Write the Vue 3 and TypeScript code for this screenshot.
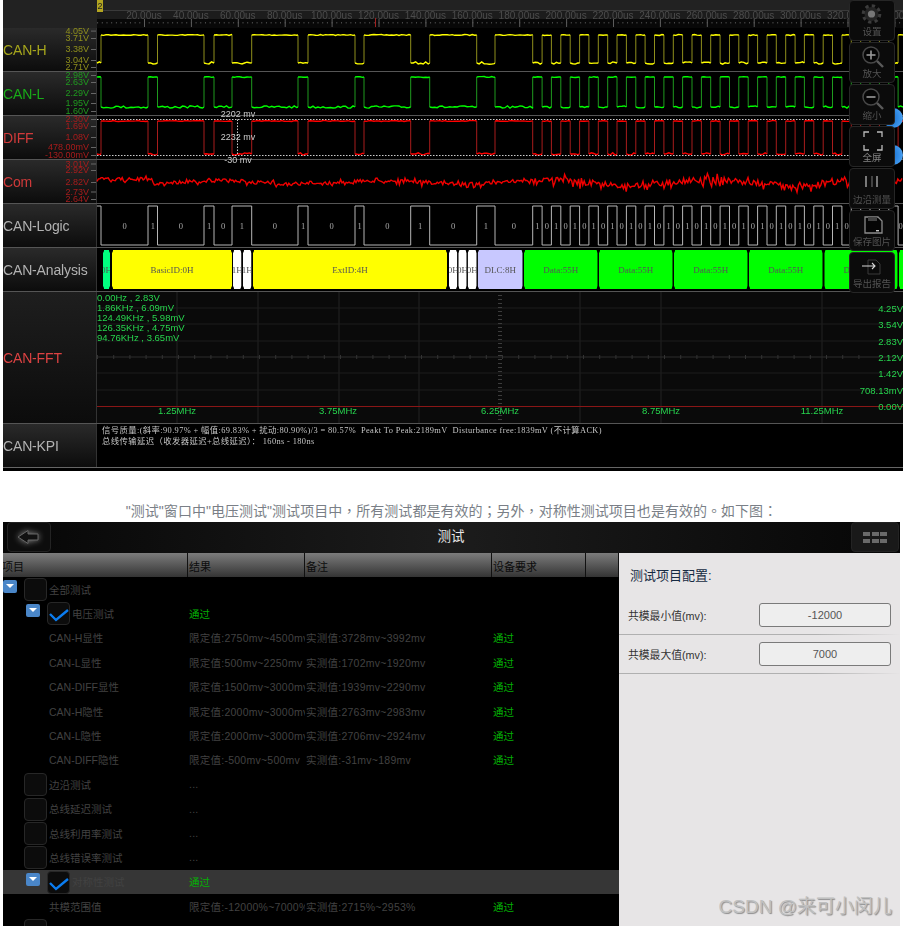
<script setup lang="ts">
// scope plot area is 806px wide, one CAN bit is 9.37px
const plotWidth = 806;
const bitWidth = 9.37;

let seed = 7;
const rnd = () => {
  seed = (seed * 16807) % 2147483647;
  return seed / 2147483647;
};

const edges = [4, 51, 60.5, 107, 117, 135, 154.7, 201, 211, 258, 267, 313.7, 332.7, 379.7, 398, 435.7];
for (let x = 435.7 + bitWidth; x < plotWidth; x += bitWidth) edges.push(+x.toFixed(1));

interface Trace {
  name: string;
  cls: string;
  color: string;
  dim: string;
  flat: string;
  rise: string;
  axis: { y: number; text: string }[];
}

const squareWave = (startHigh: boolean, hi: number, lo: number) => {
  let high = startHigh;
  let from = 0;
  let flat = "";
  let rise = "";
  for (const edge of [...edges, plotWidth]) {
    const y = high ? hi : lo;
    flat += `M${from} ${y}`;
    for (let x = from + 2.5; x < edge; x += 2.5) {
      flat += `L${x} ${(y + (rnd() - 0.5) * (high ? 1 : 2.4)).toFixed(1)}`;
    }
    flat += `L${edge} ${y}`;
    if (edge < plotWidth) rise += `M${edge} ${hi}V${lo}`;
    high = !high;
    from = edge;
  }
  return { flat, rise };
};

const traces: Trace[] = [
  {
    name: "CAN-H",
    cls: "name-yellow",
    color: "#ffff00",
    dim: "#8f8f1c",
    ...squareWave(false, 7, 35),
    axis: [
      { y: 2.6, text: "4.05V" },
      { y: 10, text: "3.71V" },
      { y: 21, text: "3.38V" },
      { y: 32, text: "3.04V" },
      { y: 39, text: "2.71V" },
    ],
  },
  {
    name: "CAN-L",
    cls: "name-green",
    color: "#00ff00",
    dim: "#1f9a1f",
    ...squareWave(true, 5, 35),
    axis: [
      { y: 3, text: "2.98V" },
      { y: 10, text: "2.63V" },
      { y: 21, text: "2.29V" },
      { y: 31, text: "1.95V" },
      { y: 39, text: "1.60V" },
    ],
  },
  {
    name: "DIFF",
    cls: "name-red",
    color: "#ff0000",
    dim: "#a81c1c",
    ...squareWave(false, 5, 38),
    axis: [
      { y: 3, text: "2.30V" },
      { y: 10, text: "1.69V" },
      { y: 21, text: "1.08V" },
      { y: 31, text: "478.00mV" },
      { y: 39, text: "-130.00mV" },
    ],
  },
];

const comAxis = [
  { y: 3.5, text: "3.01V" },
  { y: 10, text: "2.92V" },
  { y: 22, text: "2.82V" },
  { y: 31.5, text: "2.73V" },
  { y: 39, text: "2.64V" },
];

const comPath = (() => {
  let d = "";
  for (let x = 0; x <= plotWidth; x += 1.4) {
    const busy = x > 440 ? 6 : 3.4;
    const drift = x < 55 ? -3 : Math.sin(x / 26) * (x > 440 ? 3 : 1.6);
    const y = 22 + drift + (rnd() - 0.42) * busy * (rnd() > 0.75 ? 2.2 : 1);
    d += `${d ? "L" : "M"}${x.toFixed(1)} ${y.toFixed(1)}`;
  }
  return d;
})();

const logicPath = (() => {
  let high = true;
  let d = "M0 2";
  for (const edge of edges) {
    d += `H${edge}V${high ? 41 : 2}`;
    high = !high;
  }
  return d + `H${plotWidth}`;
})();

const logicBits = edges.map((edge, i) => ({
  x: (edge + (edges[i + 1] ?? plotWidth)) / 2,
  text: i % 2 ? "1" : "0",
}));

interface Seg {
  from: number;
  to: number;
  fill: string;
  text: string;
}
const segs: Seg[] = [
  { from: 103, to: 110, fill: "#00ff80", text: "0H" },
  { from: 112, to: 232, fill: "#ffff00", text: "BasicID:0H" },
  { from: 233, to: 241.5, fill: "#ffffff", text: "1H" },
  { from: 243, to: 251.5, fill: "#ffffff", text: "1H" },
  { from: 253, to: 447, fill: "#ffff00", text: "ExtID:4H" },
  { from: 449, to: 457.3, fill: "#ffffff", text: "0H" },
  { from: 458.3, to: 466.7, fill: "#ffffff", text: "0H" },
  { from: 467.7, to: 476.7, fill: "#ffffff", text: "0H" },
  { from: 477.7, to: 522.7, fill: "#c8c8ff", text: "DLC:8H" },
  { from: 524, to: 597.7, fill: "#00ff00", text: "Data:55H" },
  { from: 599, to: 672.7, fill: "#00ff00", text: "Data:55H" },
  { from: 674, to: 747.7, fill: "#00ff00", text: "Data:55H" },
  { from: 749, to: 822.7, fill: "#00ff00", text: "Data:55H" },
  { from: 824.3, to: 897.7, fill: "#00ff00", text: "Data:55H" },
  { from: 899, to: 910, fill: "#00ff00", text: "" },
];
const segPoints = (s: Seg) => {
  const a = s.from - 97;
  const b = s.to - 97;
  return `${a + 1},2 ${b - 1},2 ${b},5 ${b},38 ${b - 1},41 ${a + 1},41 ${a},38 ${a},5`;
};

const rulerMajors = Array.from({ length: 17 }, (_, i) => 47 + 46.9 * i);
const rulerMinors = Array.from({ length: 180 }, (_, i) => 0.1 + 4.69 * i).filter((x) => x < plotWidth);

const fftV = [80, 161, 242, 322, 483, 564, 725];
const fftH = [16, 32, 49, 65, 81, 98];
const fftPeaks = ["0.00Hz , 2.83V", "1.86KHz , 6.09mV", "124.49KHz , 5.98mV", "126.35KHz , 4.75mV", "94.76KHz , 3.65mV"];
const fftRight = [
  { y: 16, text: "4.25V" },
  { y: 32, text: "3.54V" },
  { y: 49, text: "2.83V" },
  { y: 65, text: "2.12V" },
  { y: 81, text: "1.42V" },
  { y: 98, text: "708.13mV" },
  { y: 114, text: "0.00V" },
];
const fftBottom = [
  { x: 80, text: "1.25MHz" },
  { x: 241, text: "3.75MHz" },
  { x: 403, text: "6.25MHz" },
  { x: 564, text: "8.75MHz" },
  { x: 725, text: "11.25MHz" },
];
const fftTicksH = Array.from({ length: 66 }, (_, i) => i * 16.2).filter((x) => x < 770);
const fftTicksV = Array.from({ length: 32 }, (_, i) => 3 + i * 4);

const tools = ["设置", "放大", "缩小", "全屏", "边沿测量", "保存图片", "导出报告"];

interface Row {
  name: string;
  indent: 0 | 1 | 2;
  box?: boolean;
  open?: boolean;
  checked?: boolean;
  limit?: string;
  real?: string;
  pass?: boolean;
  groupPass?: boolean;
  active?: boolean;
}

const rows: Row[] = [
  { name: "全部测试", indent: 1, box: true, open: true },
  { name: "电压测试", indent: 2, box: true, open: true, checked: true, groupPass: true },
  { name: "CAN-H显性", indent: 0, limit: "限定值:2750mv~4500mv", real: "实测值:3728mv~3992mv", pass: true },
  { name: "CAN-L显性", indent: 0, limit: "限定值:500mv~2250mv", real: "实测值:1702mv~1920mv", pass: true },
  { name: "CAN-DIFF显性", indent: 0, limit: "限定值:1500mv~3000mv", real: "实测值:1939mv~2290mv", pass: true },
  { name: "CAN-H隐性", indent: 0, limit: "限定值:2000mv~3000mv", real: "实测值:2763mv~2983mv", pass: true },
  { name: "CAN-L隐性", indent: 0, limit: "限定值:2000mv~3000mv", real: "实测值:2706mv~2924mv", pass: true },
  { name: "CAN-DIFF隐性", indent: 0, limit: "限定值:-500mv~500mv", real: "实测值:-31mv~189mv", pass: true },
  { name: "边沿测试", indent: 1, box: true, limit: "..." },
  { name: "总线延迟测试", indent: 1, box: true, limit: "..." },
  { name: "总线利用率测试", indent: 1, box: true, limit: "..." },
  { name: "总线错误率测试", indent: 1, box: true, limit: "..." },
  { name: "对称性测试", indent: 2, box: true, open: true, checked: true, groupPass: true, active: true },
  { name: "共模范围值", indent: 0, limit: "限定值:-12000%~7000%", real: "实测值:2715%~2953%", pass: true },
  { name: "", indent: 1, box: true },
];
</script>

<template>
  <div class="page">
    <section class="scope">
      <div class="scope-top">
        <div class="top-left"></div>
        <svg class="plot" width="806" height="28">
          <rect width="806" height="10" fill="#222" />
          <rect y="10" width="806" height="1" fill="#3a3a3a" />
          <rect y="11" width="806" height="8" fill="#1c1c1c" />
          <rect y="19" width="806" height="9" fill="#080808" />
          <rect width="6" height="12" fill="#b3a521" />
          <text x="3" y="9" class="marker" text-anchor="middle">2</text>
          <text v-for="(x, i) in rulerMajors" :key="i" :x="x" y="19" class="ruler-text" text-anchor="middle">
            {{ ((i + 1) * 20).toFixed(2) }}us
          </text>
          <rect v-for="x in rulerMinors" :key="x" :x="x" y="22" width="1" height="1.5" fill="#4c4c4c" />
          <rect v-for="x in rulerMajors" :key="x" :x="x" y="19" width="1" height="8" fill="#5c5c5c" />
          <rect x="278" y="18" width="1" height="9" fill="#a02020" />
        </svg>
      </div>

      <div v-for="t in traces" :key="t.name" class="scope-row">
        <div class="label">
          <span class="name" :class="t.cls">{{ t.name }}</span>
          <svg class="axis" width="44" height="43">
            <template v-for="a in t.axis" :key="a.text">
              <text x="37" :y="a.y + 3" text-anchor="end" class="axis-text" :fill="t.dim">{{ a.text }}</text>
              <rect x="39" :y="a.y" width="5" height="1" fill="#666" />
            </template>
          </svg>
        </div>
        <svg class="plot" width="806" height="43">
          <path :d="t.rise" :stroke="t.dim" fill="none" stroke-width="1" />
          <path :d="t.flat" :stroke="t.color" fill="none" stroke-width="1.4" />
          <template v-if="t.name === 'DIFF'">
            <line x1="0" x2="752" y1="3.5" y2="3.5" class="dotted" />
            <line x1="0" x2="752" y1="39.5" y2="39.5" class="dotted" />
            <line x1="140.5" x2="140.5" y1="3.5" y2="39.5" class="dotted" />
            <text x="141" y="1" class="cursor-text" text-anchor="middle">2202 mv</text>
            <text x="141" y="24" class="cursor-text" text-anchor="middle">2232 mv</text>
            <text x="141" y="47" class="cursor-text" text-anchor="middle">-30 mv</text>
          </template>
        </svg>
      </div>

      <div class="scope-row">
        <div class="label">
          <span class="name name-red">Com</span>
          <svg class="axis" width="44" height="43">
            <template v-for="a in comAxis" :key="a.text">
              <text x="37" :y="a.y + 3" text-anchor="end" class="axis-text" fill="#a81c1c">{{ a.text }}</text>
              <rect x="39" :y="a.y" width="5" height="1" fill="#666" />
            </template>
          </svg>
        </div>
        <svg class="plot" width="806" height="43">
          <path :d="comPath" stroke="#f00000" fill="none" stroke-width="1.4" />
        </svg>
      </div>

      <div class="scope-row">
        <div class="label"><span class="name">CAN-Logic</span></div>
        <svg class="plot" width="806" height="43">
          <path :d="logicPath" stroke="#b5b5b5" fill="none" stroke-width="1" />
          <text v-for="(b, i) in logicBits" :key="i" :x="b.x" y="25" class="bit-text" text-anchor="middle">
            {{ b.text }}
          </text>
        </svg>
      </div>

      <div class="scope-row">
        <div class="label"><span class="name">CAN-Analysis</span></div>
        <svg class="plot" width="806" height="43">
          <defs>
            <clipPath v-for="(s, i) in segs" :id="`seg-${i}`" :key="i">
              <polygon :points="segPoints(s)" />
            </clipPath>
          </defs>
          <g v-for="(s, i) in segs" :key="i" :clip-path="`url(#seg-${i})`">
            <polygon :points="segPoints(s)" :fill="s.fill" />
            <text :x="(s.from + s.to) / 2 - 97" y="24.5" class="seg-text" text-anchor="middle">{{ s.text }}</text>
          </g>
        </svg>
      </div>

      <div class="scope-row fft-row">
        <div class="label"><span class="name name-fft">CAN-FFT</span></div>
        <svg class="plot fft" width="806" height="131">
          <line v-for="x in fftV" :key="x" :x1="x" :x2="x" y1="0" y2="131" stroke="#222" />
          <line v-for="y in fftH" :key="y" x1="0" x2="806" :y1="y" :y2="y" :stroke="y === 65 ? '#2c2c2c' : '#1c1c1c'" />
          <rect v-for="x in fftTicksH" :key="x" :x="x" y="63" width="1" height="4" fill="#333" />
          <rect v-for="y in fftTicksV" :key="y" x="401" :y="y" width="4" height="1" fill="#3c3c3c" />
          <line x1="0" x2="806" y1="114.5" y2="114.5" stroke="#8a1616" />
          <text v-for="(p, i) in fftPeaks" :key="p" x="0" :y="8.5 + i * 10" class="fft-text">{{ p }}</text>
          <text v-for="r in fftRight" :key="r.text" x="806" :y="r.y + 3.5" class="fft-text" text-anchor="end">
            {{ r.text }}
          </text>
          <text v-for="b in fftBottom" :key="b.text" :x="b.x" y="122" class="fft-text" text-anchor="middle">
            {{ b.text }}
          </text>
        </svg>
      </div>

      <div class="scope-row kpi-row">
        <div class="label"><span class="name">CAN-KPI</span></div>
        <div class="kpi">
          <div>信号质量:(斜率:90.97% + 幅值:69.83% + 扰动:80.90%)/3 = 80.57%&nbsp; Peakt To Peak:2189mV&nbsp; Disturbance free:1839mV (不计算ACK)</div>
          <div>总线传输延迟（收发器延迟+总线延迟）： 160ns - 180ns</div>
        </div>
      </div>

      <span class="blob blob-a"></span>
      <span class="blob blob-b"></span>

      <aside class="tools">
        <div v-for="(tool, i) in tools" :key="tool" class="tool" :class="{ bright: i === 3 }">
          <svg width="46" height="27" class="tool-icon">
            <g v-if="i === 0">
              <circle cx="22.5" cy="14" r="8" fill="none" stroke="#3c3c3c" stroke-width="3.6" stroke-dasharray="3.2 3.08" />
              <circle cx="22.5" cy="14" r="7" fill="#242424" />
              <circle cx="22.5" cy="14" r="3.6" fill="#777" />
            </g>
            <g v-else-if="i === 1 || i === 2">
              <circle cx="22" cy="13" r="8" fill="#060606" stroke="#484848" stroke-width="1.5" />
              <path d="M28 19L34 25" stroke="#5a5a5a" stroke-width="2.4" />
              <path d="M17.5 13H26.5" stroke="#9a9a9a" stroke-width="1.6" />
              <path v-if="i === 1" d="M22 8.5V17.5" stroke="#9a9a9a" stroke-width="1.6" />
            </g>
            <g v-else-if="i === 3" fill="none" stroke="#bcbcbc" stroke-width="1.3">
              <path d="M15 11V6H20M28 6H33V11M33 19V24H28M20 24H15V19" />
            </g>
            <g v-else-if="i === 4" stroke-width="1.4">
              <path d="M17 8V19" stroke="#a8a8a8" />
              <path d="M23 8V19" stroke="#5a5a5a" />
              <path d="M28 8V19" stroke="#a8a8a8" />
            </g>
            <g v-else-if="i === 5">
              <path d="M16 7H29L33 11V23H16Z" fill="#050505" stroke="#8c8c8c" stroke-width="1.3" />
              <rect x="19" y="7" width="9" height="4" fill="#444" />
              <rect x="27" y="20" width="3" height="1.4" fill="#c8c8c8" />
            </g>
            <g v-else>
              <path d="M19 8H27L31 12V22H19Z" fill="#0a0a0a" stroke="#3a3a3a" />
              <path d="M13 14H26M23 11L26 14L23 17" fill="none" stroke="#d8d8d8" stroke-width="1.1" />
            </g>
          </svg>
          <span class="tool-label">{{ tool }}</span>
        </div>
      </aside>
    </section>

    <p class="caption">"测试"窗口中"电压测试"测试项目中，所有测试都是有效的；另外，对称性测试项目也是有效的。如下图：</p>

    <section class="tester">
      <header class="tester-head">
        <button class="head-btn back-btn" type="button">
          <svg width="44" height="30">
            <path d="M11 15L21 8.5V12H31V18H21V21.5Z" fill="#111" stroke="#666" stroke-width="1" />
          </svg>
        </button>
        <span class="tester-title">测试</span>
        <button class="head-btn menu-btn" type="button">
          <i v-for="n in 6" :key="n"></i>
        </button>
      </header>

      <div class="tester-body">
        <div class="table">
          <div class="thead">
            <span class="c1">项目</span>
            <span class="c2">结果</span>
            <span class="c3">备注</span>
            <span class="c4">设备要求</span>
            <span class="c5"></span>
          </div>
          <div v-for="(r, i) in rows" :key="i" class="tr" :class="{ active: r.active }">
            <div class="c1 tree" :class="`indent-${r.indent}`">
              <span v-if="r.open" class="expander"></span>
              <span v-if="r.box" class="check">
                <svg v-if="r.checked" width="23" height="23">
                  <path d="M3 12L9 18L21 8" fill="none" stroke="#0b7df0" stroke-width="2.4" />
                </svg>
              </span>
              <span class="item-name">{{ r.name }}</span>
            </div>
            <div class="c2 cell">
              <span v-if="r.groupPass" class="pass">通过</span>
              <template v-else>{{ r.limit }}</template>
            </div>
            <div class="c3 cell">{{ r.real }}</div>
            <div class="c4 cell"><span v-if="r.pass" class="pass">通过</span></div>
          </div>
        </div>

        <aside class="config">
          <h2 class="config-title">测试项目配置:</h2>
          <label class="config-row">
            <span>共模最小值(mv):</span>
            <input class="config-input" value="-12000" readonly />
          </label>
          <label class="config-row">
            <span>共模最大值(mv):</span>
            <input class="config-input" value="7000" readonly />
          </label>
          <span class="watermark">CSDN @来可小闵儿</span>
        </aside>
      </div>
    </section>
  </div>
</template>

<style scoped>
.page {
  width: 906px;
  height: 926px;
  overflow: hidden;
  background: #fff;
  font-family: "Liberation Sans", "Noto Sans CJK SC", sans-serif;
}

.scope {
  position: relative;
  margin-left: 3px;
  width: 900px;
  height: 471px;
  overflow: hidden;
  background: #000;
  filter: blur(0.3px);
}

.scope-top {
  display: flex;
  height: 28px;
}
.top-left {
  width: 94px;
  background: #222;
}
.plot {
  display: block;
  overflow: visible;
  flex: none;
}

.scope-row {
  display: flex;
  height: 44px;
  box-sizing: border-box;
  border-bottom: 1px solid #555;
}
.fft-row {
  height: 132px;
}
.kpi-row {
  height: 44px;
  border-bottom: 1px solid #666;
}

.label {
  display: flex;
  align-items: center;
  justify-content: space-between;
  width: 94px;
  flex: none;
  background: linear-gradient(#2a2a2a, #0c0c0c);
  border-right: 1px solid #333;
  box-sizing: border-box;
}
.fft-row .label {
  background: linear-gradient(#1e1e1e, #0c0c0c);
}
.name {
  font-size: 14px;
  letter-spacing: -0.15px;
  color: #b2b2b2;
  white-space: nowrap;
}
.name-yellow {
  color: #a6a61c;
}
.name-green {
  color: #18ac18;
}
.name-red {
  color: #d03a3a;
}
.name-fft {
  color: #dc4242;
}
.axis {
  display: block;
  overflow: visible;
  flex: none;
}
.axis-text {
  font-size: 9px;
}

.marker {
  font-size: 9px;
  fill: #222;
}
.ruler-text {
  font-size: 10px;
  fill: #4c4c4c;
}
.dotted {
  stroke: #ccc;
  stroke-width: 1;
  stroke-dasharray: 1.5 1.5;
}
.cursor-text {
  font-size: 9px;
  fill: #ccc;
}
.bit-text {
  font-family: "Liberation Serif", serif;
  font-size: 8.5px;
  fill: #aaa;
}
.seg-text {
  font-family: "Liberation Serif", serif;
  font-size: 9px;
  fill: #555;
}
.fft {
  background: #0a0a0a;
}
.fft-text {
  font-size: 9.5px;
  fill: #27d54e;
}

.kpi {
  padding: 1px 0 0 5px;
  font-family: "Liberation Serif", "Noto Sans CJK SC", serif;
  font-size: 8.4px;
  line-height: 11px;
  letter-spacing: 0.37px;
  color: #c4c4c4;
  white-space: nowrap;
}

.blob {
  position: absolute;
  left: 880px;
  width: 20px;
  height: 20px;
  border-radius: 50%;
  background: radial-gradient(circle at 30% 50%, #0e64c4, #3d96ec 70%, #8fc8f8);
}
.blob-a {
  top: 108px;
}
.blob-b {
  top: 145px;
}

.tools {
  position: absolute;
  top: 0;
  right: 8px;
  display: flex;
  flex-direction: column;
  gap: 1px;
  width: 46px;
}
.tool {
  display: flex;
  flex-direction: column;
  align-items: center;
  height: 41px;
  box-sizing: border-box;
  background: #0b0b0b;
  border: 1px solid #262626;
  border-radius: 4px;
}
.tool-icon {
  display: block;
  flex: none;
  margin: -1px;
}
.tool-label {
  font-size: 9.5px;
  line-height: 11px;
  color: #525252;
  white-space: nowrap;
}
.tool.bright .tool-label {
  color: #868686;
}

.caption {
  margin: 0;
  height: 51px;
  box-sizing: border-box;
  padding-top: 30px;
  width: 903px;
  text-align: center;
  font-family: "Liberation Sans", "Noto Sans CJK TC", sans-serif;
  font-size: 14px;
  line-height: 20px;
  letter-spacing: 0.03px;
  color: #7a7f87;
  white-space: nowrap;
}

.tester {
  margin-left: 3px;
  width: 897px;
  height: 404px;
  overflow: hidden;
  background: #000;
}
.tester-head {
  display: flex;
  align-items: flex-start;
  justify-content: space-between;
  height: 31px;
  padding: 0 1px 0 4px;
  box-sizing: border-box;
  background: linear-gradient(90deg, #060606, #1c1c1c 50%, #060606);
}
.head-btn {
  padding: 0;
  height: 30px;
  background: #0d0d0d;
  border: 1px solid #232323;
  border-radius: 4px;
}
.back-btn {
  width: 44px;
}
.back-btn svg {
  display: block;
  margin: -1px;
  filter: drop-shadow(0 0 3px #888);
}
.tester-title {
  font-size: 13.5px;
  line-height: 30px;
  color: #e8e8e8;
}
.menu-btn {
  display: grid;
  grid-template-columns: repeat(3, 7px);
  grid-auto-rows: 4px;
  gap: 3px 1.5px;
  align-content: center;
  justify-content: center;
  width: 48px;
  background: #191919;
}
.menu-btn i {
  background: #6a6a6a;
}

.tester-body {
  display: flex;
}
.table {
  width: 616px;
  flex: none;
}
.thead {
  display: flex;
  height: 24px;
  background: linear-gradient(#7c7c7c, #343434);
  font-size: 11px;
  line-height: 28px;
  color: #0c0c0c;
}
.thead span {
  box-sizing: border-box;
  padding-left: 1px;
  border-right: 1px solid #111;
  white-space: nowrap;
  overflow: hidden;
}
.thead .c1 {
  padding-left: 0;
  text-indent: -1px;
}
.c1 {
  width: 185px;
  flex: none;
}
.c2 {
  width: 117px;
  flex: none;
}
.c3 {
  width: 187px;
  flex: none;
}
.c4 {
  width: 94px;
  flex: none;
}
.c5 {
  width: 33px;
  flex: none;
}

.tr {
  display: flex;
  height: 24.4px;
  font-size: 10.5px;
  color: #424242;
}
.tr.active {
  background: #363636;
}
.tree {
  display: flex;
  position: relative;
  box-sizing: border-box;
  padding-left: 46px;
  align-items: center;
}
.tree.indent-2 {
  padding-left: 69px;
}
.expander {
  position: absolute;
  top: 3px;
  width: 14px;
  height: 13px;
  background: #4a86c8;
  border-radius: 2px;
}
.expander::after {
  content: "";
  position: absolute;
  left: 3px;
  top: 4px;
  border-style: solid;
  border-width: 4px 4px 0;
  border-color: #fff transparent transparent;
}
.indent-1 .expander {
  left: 0;
}
.indent-2 .expander {
  left: 23px;
}
.check {
  position: absolute;
  top: 1px;
  left: 21px;
  width: 23px;
  height: 23px;
  box-sizing: border-box;
  background: #0c0c0c;
  border: 1px solid #272727;
  border-radius: 4px;
}
.check svg {
  display: block;
  margin: -1px;
}
.indent-2 .check {
  left: 44px;
}
.item-name {
  white-space: nowrap;
}
.cell {
  display: flex;
  align-items: center;
  box-sizing: border-box;
  padding-left: 1px;
  white-space: nowrap;
  overflow: hidden;
  letter-spacing: 0.25px;
}
.pass {
  color: #04b004;
  letter-spacing: 0;
}

.config {
  position: relative;
  flex: 1;
  height: 373px;
  box-sizing: border-box;
  padding-top: 14px;
  background: #e7e5e6;
}
.config-title {
  margin: 0 0 12px 11px;
  font-size: 13px;
  line-height: 17px;
  font-weight: 400;
  color: #162a42;
}
.config-row {
  display: flex;
  align-items: center;
  justify-content: space-between;
  padding: 7px 9px;
  font-size: 10.8px;
  color: #333;
  border-bottom: 1px solid;
  border-image: linear-gradient(90deg, #b0b0b0 70%, #e7e5e6) 1;
}
.config-input {
  width: 132px;
  height: 24px;
  box-sizing: border-box;
  padding: 0;
  text-align: center;
  font-family: inherit;
  font-size: 11px;
  color: #555;
  background: #eeeeee;
  border: 1px solid #7a7a7a;
  border-radius: 3px;
  outline: none;
}
.watermark {
  position: absolute;
  right: 8px;
  bottom: 8px;
  font-size: 19px;
  color: #c0c0c0;
  text-shadow: 1px 1px 1px #8c8c8c;
  white-space: nowrap;
}
</style>
